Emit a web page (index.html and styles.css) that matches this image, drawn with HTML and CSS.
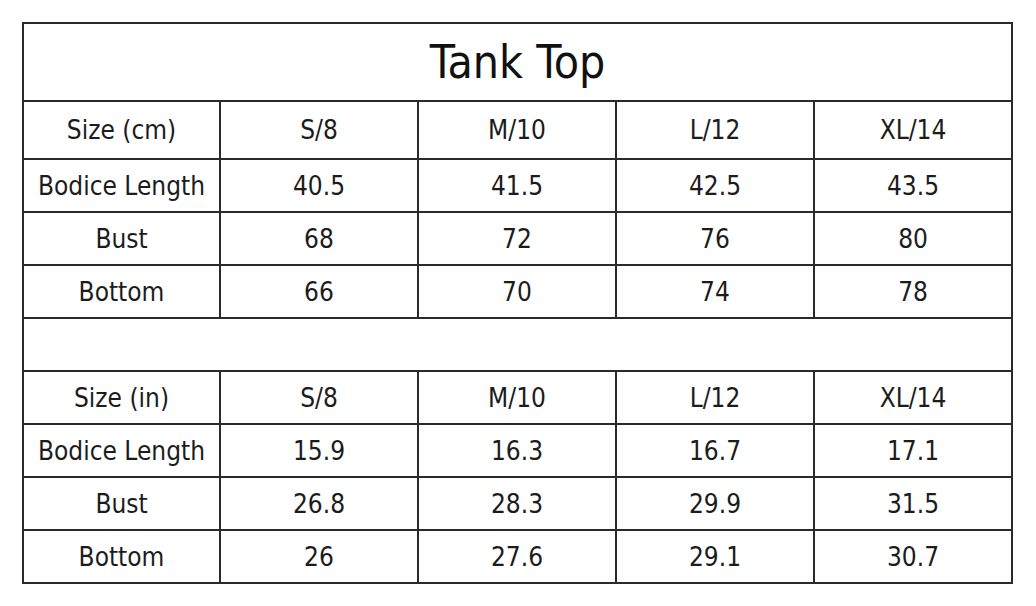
FILE: index.html
```html
<!DOCTYPE html>
<html>
<head>
<meta charset="utf-8">
<link rel="stylesheet" href="styles.css">
</head>
<body>
<div class="page">
<table class="chart">
<colgroup>
<col class="c-label"><col class="c-size"><col class="c-size"><col class="c-size"><col class="c-size">
</colgroup>
<tr class="r-title"><td colspan="5" class="title">Tank Top</td></tr>
<tr class="r-head"><td>Size (cm)</td><td>S/8</td><td>M/10</td><td>L/12</td><td>XL/14</td></tr>
<tr><td>Bodice Length</td><td>40.5</td><td>41.5</td><td>42.5</td><td>43.5</td></tr>
<tr><td>Bust</td><td>68</td><td>72</td><td>76</td><td>80</td></tr>
<tr><td>Bottom</td><td>66</td><td>70</td><td>74</td><td>78</td></tr>
<tr><td colspan="5"></td></tr>
<tr><td>Size (in)</td><td>S/8</td><td>M/10</td><td>L/12</td><td>XL/14</td></tr>
<tr><td>Bodice Length</td><td>15.9</td><td>16.3</td><td>16.7</td><td>17.1</td></tr>
<tr><td>Bust</td><td>26.8</td><td>28.3</td><td>29.9</td><td>31.5</td></tr>
<tr><td>Bottom</td><td>26</td><td>27.6</td><td>29.1</td><td>30.7</td></tr>
</table>
</div>
</body>
</html>
```
FILE: styles.css
```css
html, body {
  margin: 0;
  padding: 0;
  background: #fff;
}
.page {
  padding: 22px 0 0 22px;
}
.chart {
  border-collapse: collapse;
  table-layout: fixed;
  width: 991px;
  font-family: "DejaVu Sans Condensed", "DejaVu Sans", sans-serif;
  font-size: 26px;
  color: #1c1c1c;
}
.c-label { width: 197px; }
.c-size { width: 198px; }
.chart td {
  border: 2px solid #2a2a2a;
  height: 53px;
  padding: 0;
  text-align: center;
  vertical-align: middle;
  box-sizing: border-box;
}
.chart .r-title td {
  height: 78px;
}
.chart .r-head td {
  height: 58px;
}
.chart .title {
  font-size: 46px;
  color: #111;
}
```
